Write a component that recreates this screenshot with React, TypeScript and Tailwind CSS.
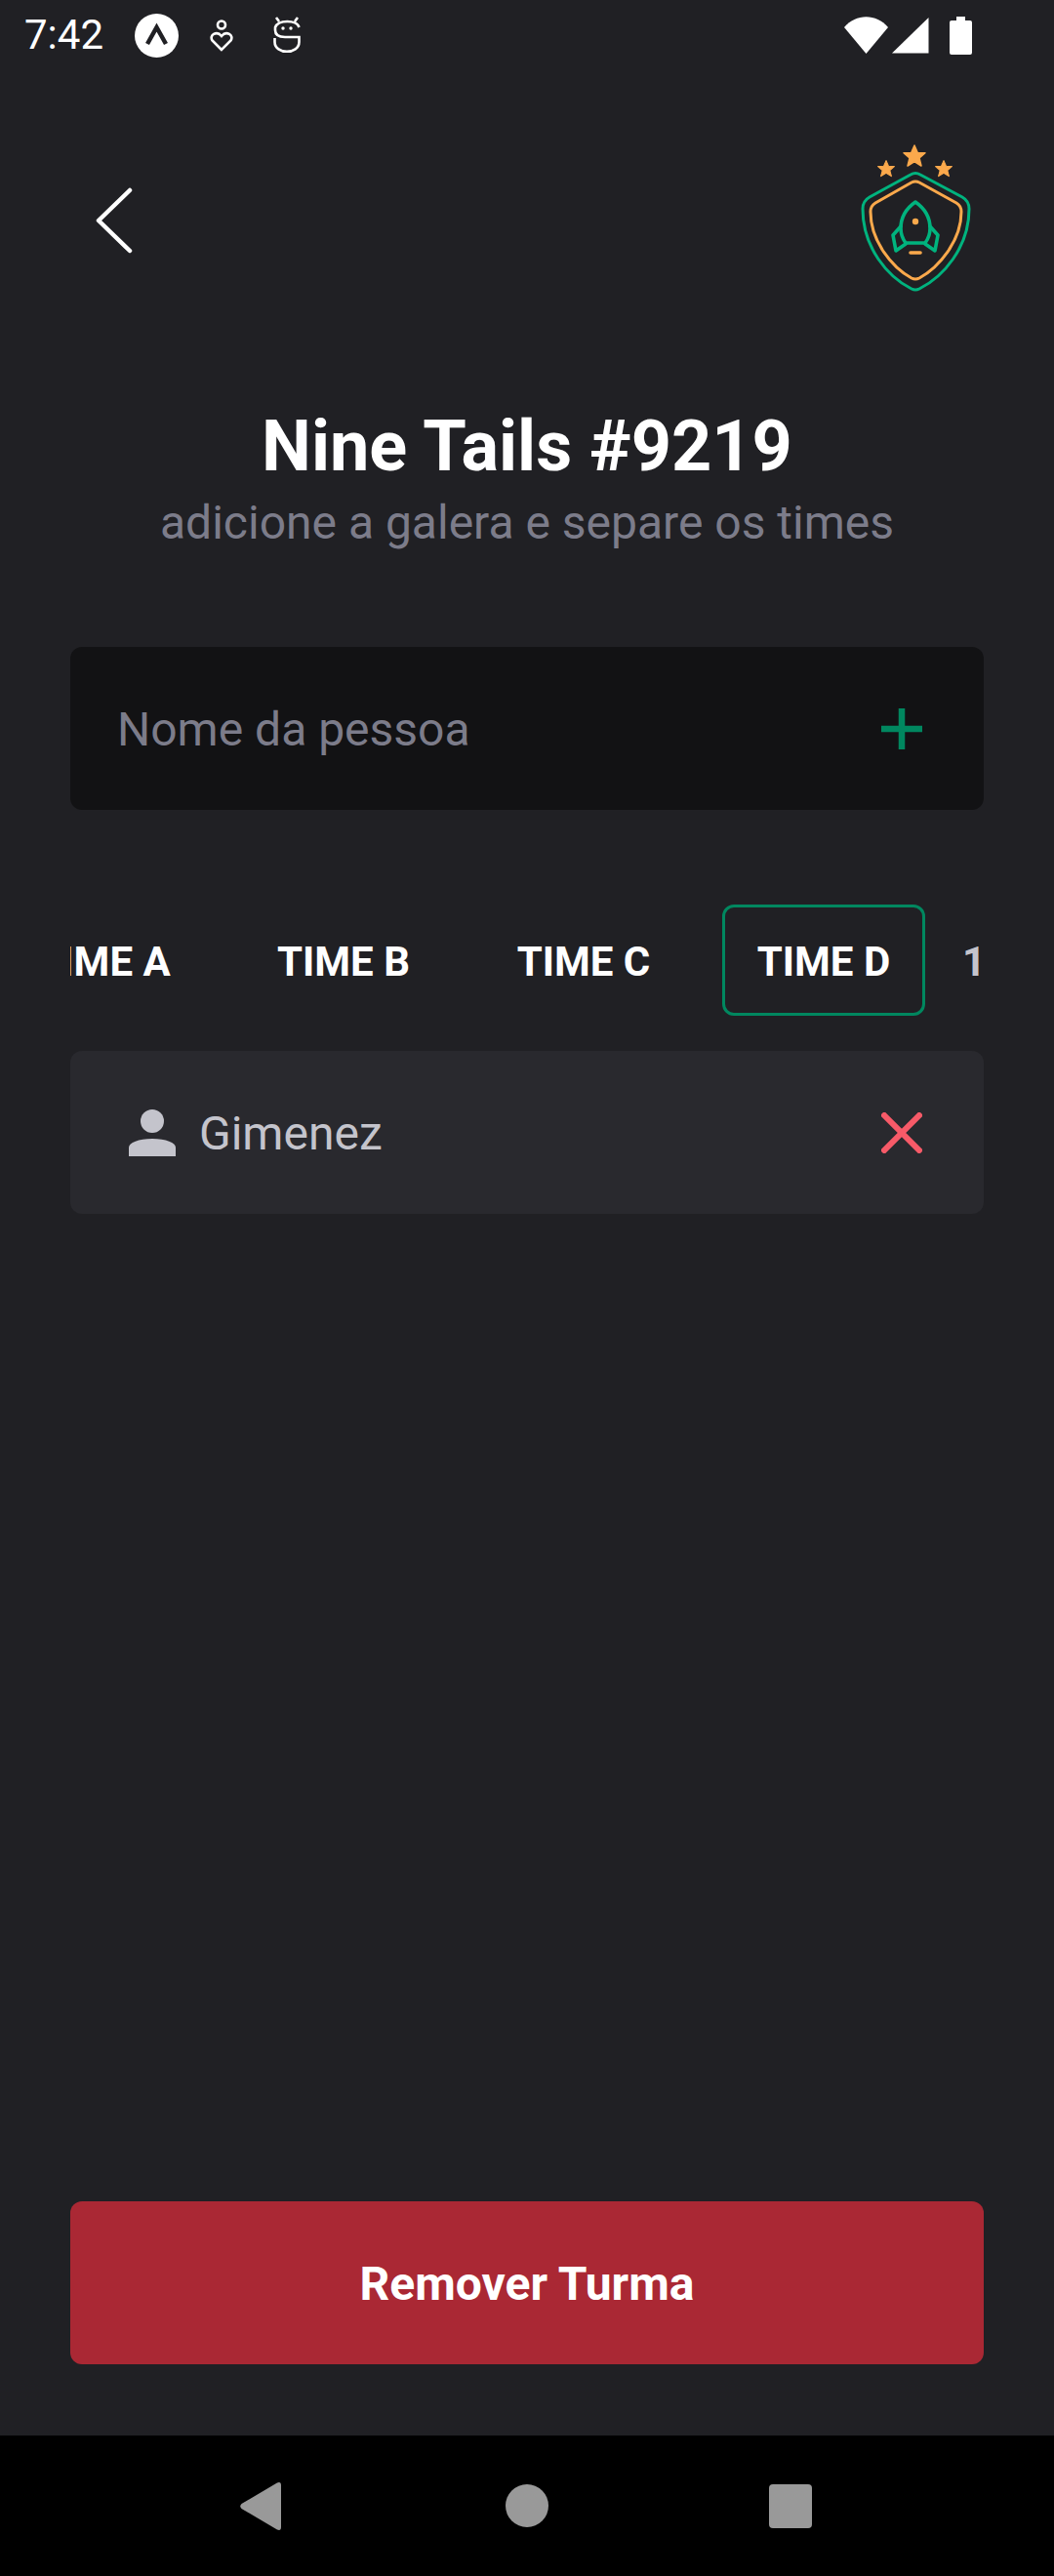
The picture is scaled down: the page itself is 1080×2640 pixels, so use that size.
const teams = ["TIME A", "TIME B", "TIME C", "TIME D"];

function StatusBar() {
  return (
    <div className="flex h-[72px] items-center justify-between pl-[25px] pr-[84px] text-white">
      <div className="flex items-center">
        <span className="text-[42px] leading-none">7:42</span>
        <svg width="45" height="45" viewBox="0 0 45 45" className="ml-[32px]">
          <circle cx="22.5" cy="22.5" r="22.5" fill="#fff" />
          <path d="M13 31 L22.5 14 L32 31" fill="none" stroke="#202024" strokeWidth="4.5" />
        </svg>
        <svg width="24" height="33" viewBox="0 0 24 33" className="ml-[32px]" fill="none" stroke="#fff" strokeWidth="2.6">
          <circle cx="12" cy="5.5" r="4" />
          <path d="M12 31 L2.5 21.5 C-1 16 7 11 12 17 C17 11 25 16 21.5 21.5 Z" />
        </svg>
        <svg width="28" height="38" viewBox="0 0 28 38" className="ml-[41px]" fill="none" stroke="#fff" strokeWidth="2.6">
          <path d="M3 1 L6 5 M25 1 L22 5 M26.5 11 C24 3 5 3 2 11 V14 C2 19 6 21 12 21 H26.5 V26 C26.5 39 1.5 39 1.5 26 V22" />
          <circle cx="10" cy="12" r="1.7" fill="#fff" stroke="none" />
          <circle cx="18" cy="12" r="1.7" fill="#fff" stroke="none" />
        </svg>
      </div>
      <div className="flex items-center">
        <svg width="46" height="38" viewBox="0 0 46 38">
          <path d="M0 11 C12 -3.5 33 -3.5 45 11 L22.5 38 Z" fill="#fff" />
        </svg>
        <svg width="38" height="38" viewBox="0 0 38 38" className="ml-[3px]">
          <path d="M37.5 1 L37.5 37.5 L0 37.5 Z" fill="#fff" />
        </svg>
        <svg width="23" height="39" viewBox="0 0 23 39" className="ml-[21px]">
          <path d="M7 0 H16 V4 H21 Q23 4 23 6 V37 Q23 39 21 39 H2 Q0 39 0 37 V6 Q0 4 2 4 H7 Z" fill="#fff" />
        </svg>
      </div>
    </div>
  );
}

function Logo() {
  const star = "M0 -11 L3.2 -3.6 L11 -3.2 L5 2 L7 10 L0 5.6 L-7 10 L-5 2 L-11 -3.2 L-3.2 -3.6 Z";
  return (
    <svg width="116" height="152" viewBox="0 0 116 152" fill="none">
      <g fill="#FBA94C" stroke="#FBA94C" strokeWidth="1.5" strokeLinejoin="round">
        <path d={star} transform="translate(57 13)" />
        <path d={star} transform="translate(28 26) scale(.76)" />
        <path d={star} transform="translate(87 26) scale(.76)" />
      </g>
      <path d="M53 32 Q58 29 63 32 L106 55 Q113 59 113 67 C113 107 86 137 62 149 Q58 151 54 149 C30 137 4 107 4 67 Q4 59 11 55 Z" stroke="#00B37E" strokeWidth="3" />
      <path d="M54 40 Q58 38 62 40 L100 61 Q105 64 105 70 C105 100 82 127 62 138 Q58 140 54 138 C34 127 12 100 12 70 Q12 64 17 61 Z" stroke="#FBA94C" strokeWidth="3" />
      <path d="M58 60 C48 67 43 77 43 87 C43 93 45 98 48 102 L68 102 C71 98 73 93 73 87 C73 77 68 67 58 60 Z" stroke="#00B37E" strokeWidth="3.6" strokeLinejoin="round" />
      <path d="M43 85 L35 94 L38 110 L48 103 M73 85 L81 94 L78 110 L68 103" stroke="#00B37E" strokeWidth="3.6" strokeLinejoin="round" strokeLinecap="round" />
      <circle cx="58" cy="80" r="3.2" fill="#FBA94C" />
      <path d="M53 112 H63" stroke="#FBA94C" strokeWidth="3.6" strokeLinecap="round" />
    </svg>
  );
}

export default function App() {
  return (
    <div className="flex h-[2640px] w-[1080px] flex-col overflow-hidden bg-[#202024] font-['Roboto',sans-serif]">
      <StatusBar />

      <header className="flex items-start justify-between pl-[96px] pr-[84px] pt-[75px]">
        <svg width="40" height="68" viewBox="0 0 40 68" fill="none" className="mt-[45px]">
          <path d="M37 3 L5 34 L37 65" stroke="#fff" strokeWidth="4.5" strokeLinecap="round" strokeLinejoin="round" />
        </svg>
        <Logo />
      </header>

      <div className="mt-[117px] flex flex-col items-center">
        <h1 className="text-[72px] font-bold leading-[84px] text-white">Nine Tails #9219</h1>
        <p className="mt-[8px] text-[48px] leading-[56px] text-[#7C7C8A]">adicione a galera e separe os times</p>
      </div>

      <div className="mx-[72px] mt-[99px] flex h-[167px] items-center justify-between rounded-[12px] bg-[#121214] pl-[48px] pr-[63px]">
        <span className="pt-[2px] text-[48px] text-[#7C7C8A]">Nome da pessoa</span>
        <svg width="42" height="42" viewBox="0 0 42 42" fill="none" stroke="#00875F" strokeWidth="6.5">
          <path d="M21 0 V42 M0 21 H42" />
        </svg>
      </div>

      <div className="mx-[72px] mt-[97px] flex h-[114px] items-center overflow-hidden">
        <div className="-ml-[70px] flex shrink-0 items-center gap-[38px]">
          {teams.map((t) => (
            <div
              key={t}
              className={
                t === "TIME D"
                  ? "flex h-[114px] w-[208px] items-center justify-center rounded-[12px] border-[3px] border-[#00875F] pt-[3px] text-[42px] font-bold text-white"
                  : "flex h-[114px] w-[208px] items-center justify-center rounded-[12px] pt-[3px] text-[42px] font-bold text-white"
              }
            >
              {t}
            </div>
          ))}
          <span className="pt-[3px] text-[42px] font-bold text-[#C4C4CC]">1</span>
        </div>
      </div>

      <div className="mx-[72px] mt-[36px] flex h-[167px] items-center justify-between rounded-[12px] bg-[#29292E] pl-[60px] pr-[63px]">
        <div className="flex items-center">
          <svg width="48" height="48" viewBox="0 0 48 48" fill="#C4C4CC">
            <circle cx="24" cy="12" r="12" />
            <path d="M0 48 V39 C0 34 10 30 24 30 C38 30 48 34 48 39 V48 Z" />
          </svg>
          <span className="ml-[24px] pt-[2px] text-[48px] text-[#C4C4CC]">Gimenez</span>
        </div>
        <svg width="42" height="42" viewBox="0 0 42 42" fill="none" stroke="#F75A68" strokeWidth="6">
          <path d="M1 1 L41 41 M41 1 L1 41" />
        </svg>
      </div>

      <div className="flex-1" />

      <button className="mx-[72px] flex h-[167px] items-center justify-center rounded-[12px] bg-[#AA2834] pt-[3px] text-[48px] font-bold text-white">
        Remover Turma
      </button>

      <div className="mt-[73px] flex h-[144px] items-center bg-black">
        <div className="flex w-full items-center justify-between pl-[246px] pr-[248px]">
          <svg width="42" height="49" viewBox="0 0 42 49">
            <path d="M38 0.5 Q42 -1 42 3 V46 Q42 50 38 48.5 L1.5 27 Q-1 24.5 1.5 22 Z" fill="#999" />
          </svg>
          <div className="ml-[4px] h-[44px] w-[44px] rounded-full bg-[#999]" />
          <div className="h-[45px] w-[44px] rounded-[4px] bg-[#999]" />
        </div>
      </div>
    </div>
  );
}
